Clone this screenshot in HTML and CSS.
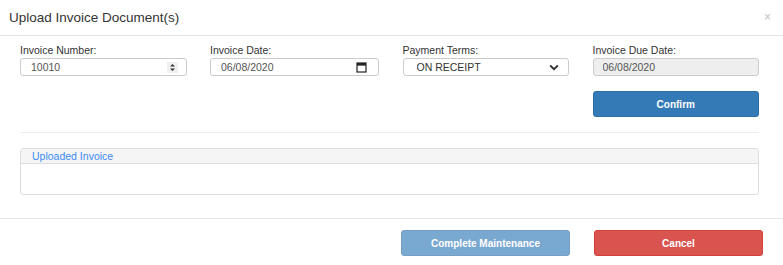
FILE: index.html
```html
<!DOCTYPE html>
<html lang="en">
<head>
  <meta charset="UTF-8">
  <title>Upload Invoice Document(s)</title>
  <link rel="stylesheet" href="styles.css">
</head>
<body>
  <div class="modal">
    <!-- Header -->
    <div class="modal-header">
      <h4 class="modal-title">Upload Invoice Document(s)</h4>
      <span class="close">&times;</span>
    </div>

    <!-- Body -->
    <div class="modal-body">
      <div class="form-row">
        <div class="field">
          <label for="invoiceNumber">Invoice Number:</label>
          <div class="control">
            <input type="text" id="invoiceNumber" value="10010">
            <span class="spinner">
              <svg width="11" height="11" viewBox="0 0 11 11">
                <path d="M3 4.5 L5.5 2 L8 4.5 Z M3 6.5 L5.5 9 L8 6.5 Z" fill="#333"/>
              </svg>
            </span>
          </div>
        </div>
        <div class="field">
          <label for="invoiceDate">Invoice Date:</label>
          <div class="control">
            <input type="text" id="invoiceDate" value="06/08/2020">
            <svg class="calendar" width="11" height="11" viewBox="0 0 11 11">
              <rect x="1" y="1" width="9" height="9" fill="none" stroke="#222" stroke-width="1.2"/>
              <rect x="1" y="1" width="9" height="2.6" fill="#222"/>
            </svg>
          </div>
        </div>
        <div class="field">
          <label for="paymentTerms">Payment Terms:</label>
          <div class="control select">
            <select id="paymentTerms">
              <option>ON RECEIPT</option>
              <option>NET 30</option>
              <option>NET 60</option>
            </select>
            <svg class="chevron" width="10" height="7" viewBox="0 0 10 7">
              <path d="M1.2 1.5 L5 5.2 L8.8 1.5" fill="none" stroke="#333" stroke-width="1.8"/>
            </svg>
          </div>
        </div>
        <div class="field">
          <label for="dueDate">Invoice Due Date:</label>
          <div class="control readonly">
            <input type="text" id="dueDate" value="06/08/2020" readonly>
          </div>
          <button class="btn btn-primary confirm">Confirm</button>
        </div>
      </div>

      <hr>

      <!-- Uploaded invoice panel -->
      <div class="panel">
        <div class="panel-heading">Uploaded Invoice</div>
        <div class="panel-body"></div>
      </div>
    </div>

    <!-- Footer -->
    <div class="modal-footer">
      <button class="btn btn-primary" disabled>Complete Maintenance</button>
      <button class="btn btn-danger">Cancel</button>
    </div>
  </div>
</body>
</html>
```

FILE: styles.css
```css
body {
  margin: 0;
  font-family: "Liberation Sans", Arial, sans-serif;
  font-size: 10.5px;
  color: #333;
  background: #fff;
}
.modal-header {
  display: flex;
  justify-content: space-between;
  align-items: center;
  padding: 8px 12px 8px 9px;
  border-bottom: 1px solid #e5e5e5;
}
.modal-title {
  margin: 0;
  font-size: 13.5px;
  font-weight: normal;
  line-height: 19px;
  color: #333;
}
.close {
  font-size: 12px;
  font-weight: bold;
  line-height: 1;
  color: rgba(0, 0, 0, 0.2);
  margin-top: -2px;
}
.modal-body {
  padding: 7px 24px 23px 20px;
}
.form-row {
  display: grid;
  grid-template-columns: repeat(4, 1fr);
  column-gap: 23.5px;
}
.field label {
  display: block;
  line-height: 15px;
}
.control {
  display: flex;
  align-items: center;
  height: 18px;
  box-sizing: border-box;
  border: 1px solid #ccc;
  border-radius: 3px;
  padding: 0 4px 0 10px;
  background: #fff;
}
.control input,
.control select {
  flex: 1;
  min-width: 0;
  border: none;
  outline: none;
  padding: 0;
  margin: 0;
  background: transparent;
  font-family: inherit;
  font-size: 10.5px;
  color: #555;
  height: 16px;
}
.control.select {
  padding-left: 13px;
}
.control.select select {
  appearance: none;
  -webkit-appearance: none;
  color: #333;
}
.control.readonly {
  background: #eee;
  padding-left: 9px;
}
.spinner {
  display: flex;
  width: 11px;
  height: 11px;
  background: #f0f0f0;
  margin-right: 4px;
}
.calendar {
  margin-right: 7px;
}
.chevron {
  margin-right: 5px;
}
.btn {
  display: block;
  height: 26px;
  box-sizing: border-box;
  border: 1px solid transparent;
  border-radius: 3px;
  font-family: inherit;
  font-size: 10px;
  font-weight: bold;
  color: #fff;
  cursor: pointer;
}
.btn-primary {
  background: #337ab7;
  border-color: #2e6da4;
}
.btn-primary:disabled {
  opacity: 0.65;
  cursor: default;
}
.btn-danger {
  background: #d9534f;
  border-color: #d43f3a;
}
.confirm {
  width: 100%;
  margin-top: 15px;
}
hr {
  border: none;
  border-top: 1px solid #eee;
  margin: 15px 0;
}
.panel {
  border: 1px solid #ddd;
  border-radius: 3px;
}
.panel-heading {
  background: #f5f5f5;
  border-bottom: 1px solid #ddd;
  color: #3b8bf5;
  line-height: 14px;
  padding-left: 11px;
  border-radius: 3px 3px 0 0;
}
.panel-body {
  height: 30px;
}
.modal-footer {
  display: flex;
  justify-content: flex-end;
  gap: 24px;
  padding: 11px 20px 0 0;
  border-top: 1px solid #e5e5e5;
}
.modal-footer .btn {
  width: 169px;
}
```
